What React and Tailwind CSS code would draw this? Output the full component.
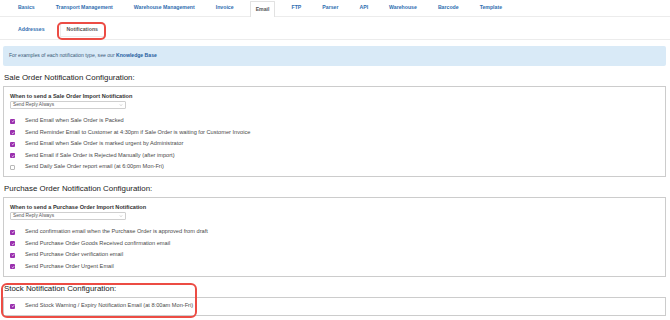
import React from "react";

const tabs = ["Basics", "Transport Management", "Warehouse Management", "Invoice", "Email", "FTP", "Parser", "API", "Warehouse", "Barcode", "Template"];

function Check({ on }) {
  if (!on) {
    return <span className="block w-[5px] h-[5px] border border-[#b8b8b8] rounded-[1px] bg-white shrink-0" />;
  }
  return (
    <span className="flex items-center justify-center w-[5px] h-[5px] rounded-[1px] bg-[#9a2fae] shrink-0">
      <svg viewBox="0 0 10 10" className="w-[4px] h-[4px]">
        <path d="M2 5.2 L4.2 7.3 L8 2.8" fill="none" stroke="#fff" strokeWidth="1.8" />
      </svg>
    </span>
  );
}

function Row({ on, children }) {
  return (
    <div className="flex items-center h-[11.5px]">
      <Check on={on} />
      <span className="ml-[10px] text-[5.65px] text-[#4a4a4a] leading-none whitespace-nowrap">{children}</span>
    </div>
  );
}

function Select() {
  return (
    <div className="mt-[2px] w-[116px] h-[8px] border border-[#cfcfcf] rounded-[1px] flex items-center justify-between px-[2px]">
      <span className="text-[4.8px] text-[#555] leading-[6px]">Send Reply Always</span>
      <svg viewBox="0 0 10 10" className="w-[4px] h-[4px]">
        <path d="M2 3.5 L5 6.5 L8 3.5" fill="none" stroke="#888" strokeWidth="1" />
      </svg>
    </div>
  );
}

function Heading({ children }) {
  return (
    <div className="h-[20px] flex items-center pl-[4px] pt-[4px]">
      <span className="text-[7.9px] text-[#222] leading-none whitespace-nowrap">{children}</span>
    </div>
  );
}

export default function App() {
  return (
    <div className="w-[670px] h-[320px] bg-white overflow-hidden font-['Liberation_Sans',Arial,sans-serif]">
      <div className="h-[17px] border-b border-[#ececec] flex items-end pl-[13px] gap-[11px]">
        {tabs.map((t) =>
          t === "Email" ? (
            <div key={t} className="h-[16px] px-[5px] flex items-center border border-b-0 border-[#e2e2e2] bg-white rounded-t-[1px] -mb-px">
              <span className="text-[5.2px] font-bold text-[#555] leading-none whitespace-nowrap">{t}</span>
            </div>
          ) : (
            <div key={t} className="h-[16px] px-[5px] flex items-center">
              <span className="text-[5.2px] font-bold text-[#2f6eb0] leading-none whitespace-nowrap">{t}</span>
            </div>
          )
        )}
      </div>
      <div className="h-[23px] border-b border-[#ececec] flex items-end pb-[2px] pl-[13px] gap-[10px]">
        <div className="px-[5px] flex items-center h-[14px]">
          <span className="text-[5.2px] font-bold text-[#2f6eb0] leading-none">Addresses</span>
        </div>
        <div className="relative px-[6px] flex items-center h-[14px] border border-[#ececec] bg-white">
          <span className="text-[5.2px] font-bold text-[#555] leading-none">Notifications</span>
          <div className="absolute -left-[4px] -right-[2px] -top-[2px] -bottom-[4px] border-2 border-[#ec4c44] rounded-[5px]" />
        </div>
      </div>
      <div className="mt-[6px] mx-[3px] w-[663px] h-[20px] bg-[#d9eaf7] rounded-[2px] flex items-center pl-[6px]">
        <span className="text-[5.1px] text-[#3b5a78] leading-none whitespace-nowrap">
          For examples of each notification type, see our <span className="font-bold text-[#1d5d9e]">Knowledge Base</span>
        </span>
      </div>

      <Heading>Sale Order Notification Configuration:</Heading>
      <div className="mx-[3px] w-[663px] border border-[#cccccc] pt-[6px] px-[6px] pb-[3px]">
        <div className="text-[5.6px] font-bold text-[#333] leading-[6px] whitespace-nowrap">When to send a Sale Order Import Notification</div>
        <Select />
        <div className="mt-[6.5px]">
          <Row on>Send Email when Sale Order is Packed</Row>
          <Row on>Send Reminder Email to Customer at 4:30pm if Sale Order is waiting for Customer Invoice</Row>
          <Row on>Send Email when Sale Order is marked urgent by Administrator</Row>
          <Row on>Send Email if Sale Order is Rejected Manually (after import)</Row>
          <Row>Send Daily Sale Order report email (at 6:00pm Mon-Fri)</Row>
        </div>
      </div>

      <Heading>Purchase Order Notification Configuration:</Heading>
      <div className="mx-[3px] w-[663px] border border-[#cccccc] pt-[6px] px-[6px] pb-[3px]">
        <div className="text-[5.6px] font-bold text-[#333] leading-[6px] whitespace-nowrap">When to send a Purchase Order Import Notification</div>
        <Select />
        <div className="mt-[6.5px]">
          <Row on>Send confirmation email when the Purchase Order is approved from draft</Row>
          <Row on>Send Purchase Order Goods Received confirmation email</Row>
          <Row on>Send Purchase Order verification email</Row>
          <Row on>Send Purchase Order Urgent Email</Row>
        </div>
      </div>

      <div className="relative">
        <Heading>Stock Notification Configuration:</Heading>
        <div className="mx-[3px] w-[663px] border border-[#cccccc] px-[6px] py-[3px]">
          <Row on>Send Stock Warning / Expiry Notification Email (at 8:00am Mon-Fri)</Row>
        </div>
        <div className="absolute left-[1px] w-[196px] top-[6px] h-[35px] border-2 border-[#ec4c44] rounded-[6px]" />
      </div>
    </div>
  );
}
